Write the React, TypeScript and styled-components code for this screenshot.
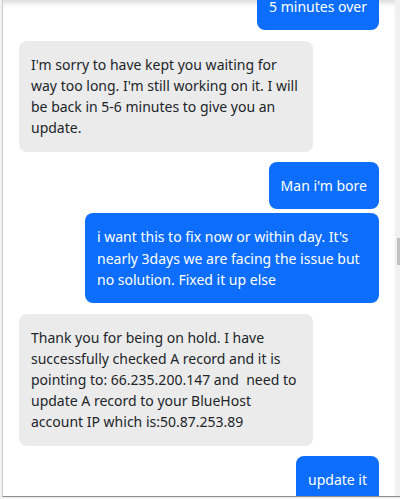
import React from "react";
import styled, { createGlobalStyle } from "styled-components";

const GlobalStyle = createGlobalStyle`
  html, body { margin: 0; padding: 0; background: #ffffff; overflow: hidden; }
  * { box-sizing: border-box; }
`;

const Window = styled.div`
  display: flex;
  height: 499px;
  padding-left: 2px;
  padding-bottom: 2px;
  background: #f1f1f1;
  overflow: hidden;
`;

const Frame = styled.div`
  flex: 1;
  display: flex;
  min-width: 0;
  background: #ffffff;
  border-left: 1px solid #cdcdcd;
  border-bottom: 1px solid #8c8c8c;
`;

const Pane = styled.div`
  position: relative;
  flex: 1;
  min-width: 0;
  overflow: hidden;
  box-shadow: inset 0 6px 6px -4px rgba(0, 0, 0, 0.18);
`;

const MessageList = styled.div`
  display: flex;
  flex-direction: column;
  padding: 0 16px;
  margin-top: -17px;
`;

const Bubble = styled.div<{ $mine: boolean; $same: boolean }>`
  align-self: ${(p) => (p.$mine ? "flex-end" : "flex-start")};
  max-width: 294px;
  margin-top: ${(p) => (p.$same ? "4px" : "10.6px")};
  padding: 13px 12px;
  border-radius: 8px;
  background: ${(p) => (p.$mine ? "#0d6efd" : "#ebebeb")};
  color: ${(p) => (p.$mine ? "#ffffff" : "#212529")};
  font-family: "Noto Sans", "Open Sans", sans-serif;
  font-size: 14px;
  line-height: 21.2px;
  white-space: pre-wrap;
  &:first-child {
    margin-top: 0;
  }
`;

const ScrollTrack = styled.div`
  width: 5px;
  flex: none;
  background: #f1f1f1;
  padding-top: 238px;
  display: flex;
  flex-direction: column;
  align-items: flex-end;
`;

const ScrollThumb = styled.div`
  width: 3px;
  height: 27px;
  background: #c1c1c1;
`;

type Msg = { mine: boolean; text: string };

const messages: Msg[] = [
  { mine: true, text: "5 minutes over" },
  {
    mine: false,
    text: "I'm sorry to have kept you waiting for way too long. I'm still working on it. I will be back in 5-6 minutes to give you an update.",
  },
  { mine: true, text: "Man i'm bore" },
  {
    mine: true,
    text: "i want this to fix now or within day. It's nearly 3days we are facing the issue but no solution. Fixed it up else",
  },
  {
    mine: false,
    text: "Thank you for being on hold. I have successfully checked A record and it is pointing to: 66.235.200.147 and  need to update A record to your BlueHost account IP which is:50.87.253.89",
  },
  { mine: true, text: "update it" },
];

export default function App() {
  return (
    <>
      <GlobalStyle />
      <Window>
        <Frame>
          <Pane>
            <MessageList>
              {messages.map((m, i) => (
                <Bubble
                  key={i}
                  $mine={m.mine}
                  $same={i > 0 && messages[i - 1].mine === m.mine}
                >
                  {m.text}
                </Bubble>
              ))}
            </MessageList>
          </Pane>
          <ScrollTrack>
            <ScrollThumb />
          </ScrollTrack>
        </Frame>
      </Window>
    </>
  );
}
